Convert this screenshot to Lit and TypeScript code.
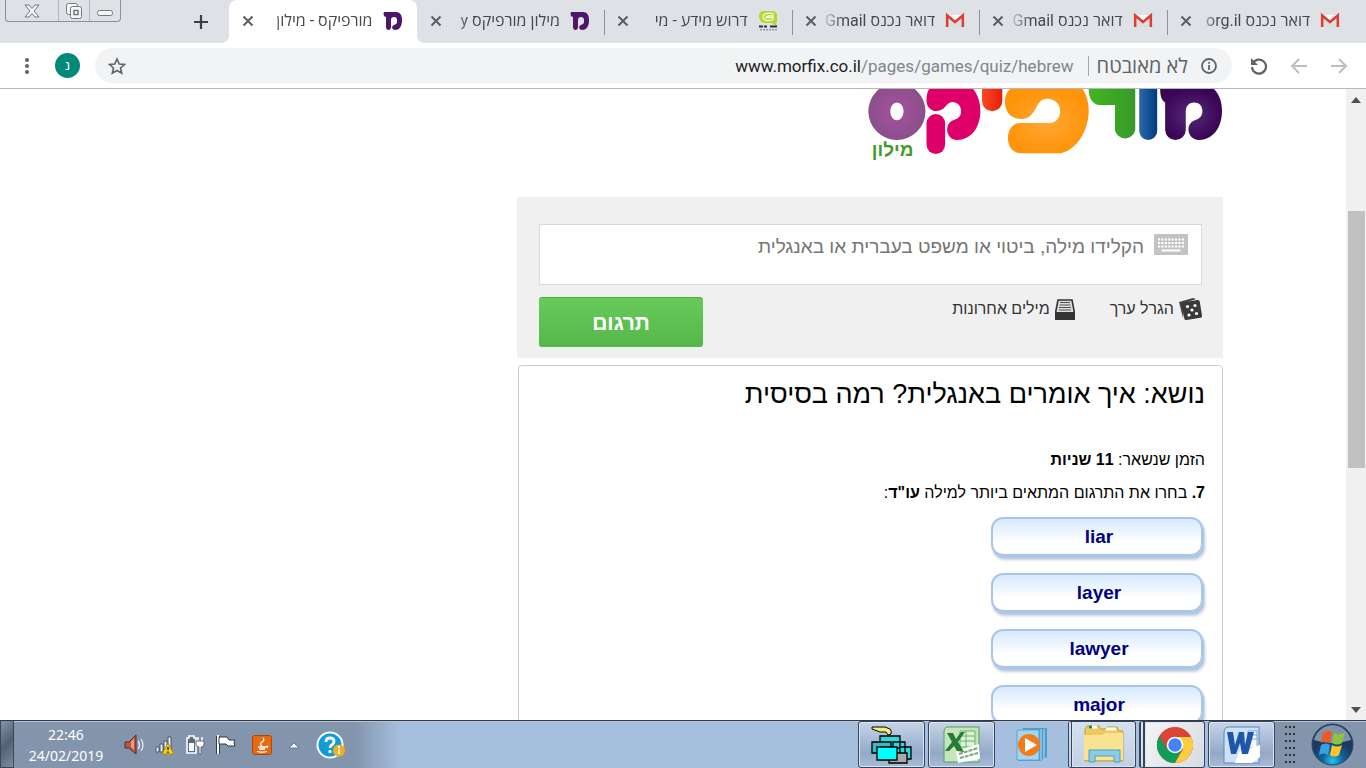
import { LitElement, html, css, svg } from "lit";
import { customElement } from "lit/decorators.js";

const gmail = svg`<svg class="fav" viewBox="0 0 20 20"><path d="M2 4h16v12H2z" fill="#f1f1f1"/><path d="M4 16V8l6 5 6-5v8z" fill="#dedede"/><path d="M4 4l6 6 6-6z" fill="#fafafa"/><path d="M2.200 16V4.500l7.800 6.500 7.800-6.500V16" fill="none" stroke="#d93f33" stroke-width="2.600"/></svg>`;
const morfix = svg`<svg class="fav" viewBox="0 0 20 20"><path d="M1 1h12c4 0 6 3 6 8 0 7-3 10-7 10-3 0-4-4-1-5 3-1 3-2 3-5 0-2-1-3-3-3s-3 1-3 3v7c0 4-5 4-5 0V6C1 6 0 3 1 1z" fill="#4b1766"/></svg>`;
const prog = svg`<svg class="fav" viewBox="0 0 20 20"><path d="M5 0h9q5 0 5 4v7q0 1-1 1l1 4-5-4H7q-5 0-6-6 0-6 4-6z" fill="#b9d531"/><path d="M16 3.500C12 1 5 2 5 6s6 4.500 10 2.500V5q-5-1-7 1.500h7" fill="none" stroke="#f3f9cf" stroke-width="1.300"/><path d="M1 15.500h4m1 0h3m3 0h7" stroke="#333" stroke-width="2.200"/><path d="M2 18.800h17" stroke="#777" stroke-width="1" stroke-dasharray="2 1"/></svg>`;

const tabs = [
  { icon: gmail, title: "דואר נכנס org.il", active: false },
  { icon: gmail, title: "דואר נכנס Gmail", active: false },
  { icon: gmail, title: "דואר נכנס Gmail", active: false },
  { icon: prog, title: "דרוש מידע - מי", active: false },
  { icon: morfix, title: "מילון מורפיקס y", active: false },
  { icon: morfix, title: "מורפיקס - מילון", active: true },
];

@customElement("browser-tabs")
class BrowserTabs extends LitElement {
  static styles = css`
    :host { display: flex; height: 43px; background: #dee1e6; direction: rtl; padding-right: 12px; font: 16px Roboto, "Open Sans", "Liberation Sans", sans-serif; color: #45494d; }
    .tabs { flex: 1; display: flex; min-width: 0; }
    .tab { flex: 1; min-width: 0; display: flex; align-items: center; padding: 0 14px 2px 13px; position: relative; }
    .tab.line::before { content: ""; position: absolute; left: 0; top: 10px; height: 25px; width: 1px; background: #8f9398; }
    .active { background: #fff; border-radius: 8px 8px 0 0; }
    .active::before, .active::after { content: ""; position: absolute; bottom: 0; width: 8px; height: 8px; }
    .active::before { right: -8px; background: radial-gradient(circle at 100% 0, #dee1e6 8px, #fff 8px); }
    .active::after { left: -8px; background: radial-gradient(circle at 0 0, #dee1e6 8px, #fff 8px); }
    .fav { width: 20px; height: 20px; flex: none; }
    .title { flex: 1; min-width: 0; overflow: hidden; white-space: nowrap; margin: 0 10px 0 4px; line-height: 26px; mask-image: linear-gradient(to left, #000 80%, transparent); }
    button { border: 0; padding: 0; background: none; color: inherit; display: grid; place-items: center; }
    .close { width: 12px; height: 16px; }
    .left { width: 229px; display: flex; justify-content: space-between; align-items: flex-start; }
    .add { width: 16px; height: 43px; margin-right: 20px; }
    .win { direction: ltr; display: flex; height: 22px; margin-left: 5px; border: 1px solid #8d9095; border-top: 0; border-radius: 0 0 4px 4px; box-sizing: border-box; }
    .win button { width: 31px; }
    .win button + button { border-left: 1px solid #b3b6ba; }
    .win .x { width: 52px; }
  `;
  render() {
    return html`
      <div class="tabs" role="tablist">
        ${tabs.map((t, i) => html`<div class="tab ${t.active ? "active" : ""} ${i < 4 ? "line" : ""}" role="tab">
          ${t.icon}<span class="title">${t.title}</span>
          <button class="close" aria-label="סגירה"><svg width="12" height="12"><path d="M1.500 1.500l9 9m0-9l-9 9" stroke="#5a5e62" stroke-width="2"/></svg></button>
        </div>`)}
      </div>
      <div class="left">
        <button class="add" aria-label="כרטיסייה חדשה"><svg width="16" height="16"><path d="M8 1v14M1 8h14" stroke="#3c4043" stroke-width="2.200"/></svg></button>
        <div class="win">
          <button class="x" aria-label="סגור"><svg width="16" height="14"><path d="M1 1h4l3 3.500L11 1h4l-5 6 5 6h-4L8 9.500 5 13H1l5-6z" fill="#f4f5f6" stroke="#74787c"/></svg></button>
          <button aria-label="שחזר"><svg width="18" height="17"><rect x="1.500" y="1.500" width="11" height="11" rx="2" fill="#f4f5f6" stroke="#74787c"/><rect x="5.500" y="4.500" width="11" height="12" rx="2" fill="#f4f5f6" stroke="#74787c"/><rect x="9" y="8.500" width="4" height="4" fill="#fff" stroke="#74787c" stroke-width="1.500"/></svg></button>
          <button aria-label="מזער"><svg width="16" height="16"><rect x=".5" y="7.500" width="15" height="5" rx="2" fill="#f4f5f6" stroke="#74787c"/></svg></button>
        </div>
      </div>`;
  }
}

@customElement("browser-toolbar")
class BrowserToolbar extends LitElement {
  static styles = css`
    :host { display: flex; align-items: center; height: 45px; box-sizing: content-box; border-bottom: 1px solid #b6b7b9; background: #fff; direction: rtl; padding: 0 17px; font: 20px "Open Sans", "Liberation Sans", sans-serif; color: #5f6368; }
    button { border: 0; padding: 0; background: none; color: inherit; width: 20px; height: 32px; display: grid; place-items: center; }
    .nav { display: flex; gap: 20px; }
    .box { flex: 1; min-width: 0; height: 35px; border-radius: 18px; background: #f1f3f4; margin: 0 17px 0 15px; display: flex; align-items: center; padding: 0 14px 0 12px; white-space: nowrap; }
    .safe { margin-right: 12px; line-height: 30px; }
    .line { width: 1px; height: 20px; background: #a5a8ab; margin: 0 8px 0 14px; }
    .url { flex: 1; direction: ltr; text-align: right; overflow: hidden; color: #80868b; font: 17px/30px Roboto, sans-serif; }
    .host { color: #202124; }
    .me { width: 25px; height: 25px; border-radius: 50%; background: #00897b; color: #fff; font-size: 13px; margin-left: 18px; }
  `;
  render() {
    return html`
      <div class="nav">
        <button aria-label="קדימה"><svg width="18" height="18"><path d="M1 9h15M9 2l7 7-7 7" fill="none" stroke="#bcbec1" stroke-width="2"/></svg></button>
        <button aria-label="הקודם"><svg width="18" height="18"><path d="M17 9H2m7-7L2 9l7 7" fill="none" stroke="#bcbec1" stroke-width="2"/></svg></button>
        <button aria-label="רענון"><svg width="18" height="18"><path d="M3 6a7 7 0 1 1-1 4" fill="none" stroke="#5f6368" stroke-width="2.200"/><path d="M1 1v7h7z" fill="#5f6368"/></svg></button>
      </div>
      <div class="box">
        <svg width="18" height="18"><circle cx="9" cy="9" r="7" fill="none" stroke="#5f6368" stroke-width="1.800"/><path d="M9 8v5M9 5v1.800" stroke="#5f6368" stroke-width="1.800"/></svg>
        <span class="safe">לא מאובטח</span><span class="line"></span>
        <span class="url" role="textbox" aria-label="כתובת"><span class="host">www.morfix.co.il</span>/pages/games/quiz/hebrew</span>
        <button aria-label="סימנייה"><svg width="18" height="18" viewBox="0 0 18 18"><path d="M9 2l2.200 5 5.300.5-4 3.500 1.200 5.200L9 13.500l-4.700 2.700L5.500 11l-4-3.500L6.800 7z" fill="none" stroke="#5f6368" stroke-width="1.600"/></svg></button>
      </div>
      <button class="me" aria-label="פרופיל">נ</button>
      <button aria-label="תפריט"><svg width="6" height="18"><circle cx="3" cy="3" r="2" fill="#5f6368"/><circle cx="3" cy="9" r="2" fill="#5f6368"/><circle cx="3" cy="15" r="2" fill="#5f6368"/></svg></button>`;
  }
}

@customElement("quiz-page")
class QuizPage extends LitElement {
  static styles = css`
    :host { display: flex; flex: 1; min-height: 0; overflow: hidden; direction: rtl; background: #fff; font-family: "Liberation Sans", Arial, sans-serif; color: #000; }
    .bar { width: 20px; background: #f0f0f0; display: flex; flex-direction: column; align-items: center; justify-content: space-between; padding: 8px 0 7px; box-sizing: border-box; }
    .track { flex: 1; width: 17px; display: grid; grid-template-rows: 107fr 256fr 238fr; }
    .thumb { grid-row: 2; background: #c1c1c1; }
    .scroll { flex: 1; min-width: 0; display: flex; justify-content: center; overflow: hidden; }
    .wrap { width: 100%; max-width: 1100px; }
    .main { max-width: 706px; }
    .logo { display: block; width: 355px; height: 72px; }
    .panel { background: #f0f0f0; margin-top: 36px; padding: 27px 21px 11px 22px; }
    .field { display: flex; background: #fff; border: 1px solid #d9d9d9; height: 50px; padding: 9px 13px 0; gap: 10px; align-items: flex-start; box-sizing: content-box; }
    textarea { flex: 1; min-width: 0; height: 40px; padding: 0; border: 0; outline: 0; resize: none; background: none; font: 19px/26px "Liberation Sans", Arial, sans-serif; color: #333; }
    textarea::placeholder { color: #757575; opacity: 1; }
    .row { display: flex; margin-top: 12px; align-items: flex-start; font: 16px/24px "Liberation Sans", Arial, sans-serif; }
    .row a { display: flex; align-items: center; gap: 5px; color: #333; text-decoration: none; margin-left: 35px; }
    .go { margin-right: auto; width: 164px; height: 50px; border: 0; border-top: 1px solid #4fae43; border-radius: 3px; background: linear-gradient(#66cb5a, #55b749); color: #fff; font: bold 21px "Liberation Sans", Arial, sans-serif; }
    .quiz { margin: 7px 0 0 1px; border: 1px solid #ccc; border-radius: 4px; padding: 10px 17px 40px; min-height: 400px; }
    h1 { font-weight: 400; font-size: 27px; line-height: 36px; margin: 0; }
    .time { font-size: 16px; line-height: 20px; margin: 38px 0 0; }
    .ask { font-size: 16px; line-height: 20px; margin: 13px 0 14px; }
    .answers { display: flex; flex-direction: column; gap: 17px; }
    .answers button { width: 212px; height: 39px; margin-right: 2px; border: 2px solid #a9c6e8; border-radius: 12px; background: linear-gradient(#d5e9ff, #fff 65%); box-shadow: 1px 2px 1px #a9c6e8, 2px 4px 3px #c3ccd8; color: #000080; font: bold 19px "Liberation Sans", Arial, sans-serif; padding: 0 0 0 4px; }
  `;
  render() {
    return html`
      <div class="bar" aria-hidden="true">
        <svg width="10" height="6"><path d="M0 6L5 0l5 6z" fill="#505050"/></svg>
        <div class="track"><div class="thumb"></div></div>
        <svg width="10" height="6"><path d="M0 0l5 6 5-6z" fill="#505050"/></svg>
      </div>
      <div class="scroll"><div class="wrap"><main class="main">
        <svg class="logo" viewBox="54 12 1068 216" preserveAspectRatio="xMaxYMid" role="img" aria-label="מורפיקס מילון">
          <defs>
            <radialGradient id="a"><stop offset="0" stop-color="#a650a0"/><stop offset="1" stop-color="#8b4f8a"/></radialGradient>
            <radialGradient id="b"><stop offset="0" stop-color="#ffa735"/><stop offset="1" stop-color="#ff940a"/></radialGradient>
            <radialGradient id="c"><stop offset="0" stop-color="#56297a"/><stop offset="1" stop-color="#3a0554"/></radialGradient>
            <linearGradient id="d"><stop offset="0" stop-color="#2b68a8"/><stop offset="1" stop-color="#003d80"/></linearGradient>
            <linearGradient id="e"><stop offset="0" stop-color="#42b51c"/><stop offset="1" stop-color="#379a2c"/></linearGradient>
            <linearGradient id="f"><stop offset="0" stop-color="#fa4a22"/><stop offset="1" stop-color="#e61e0a"/></linearGradient>
          </defs>
          <path fill="url(#a)" fill-rule="evenodd" d="M55 79a86 86 0 1 0 172 0a86 86 0 1 0-172 0zM121 79a20 27 0 1 1 40 0a20 27 0 1 1-40 0z"/>
          <g fill="#de0068"><rect x="230" y="87" width="56" height="120" rx="28"/><path d="M238 12H370C384 28 392 52 392 78C392 130 362 165 322 165C304 165 292 150 292 134C292 112 308 106 320 102C332 96 334 88 334 78C334 62 322 51 308 51C288 51 288 78 260 78C242 78 230 64 230 46C230 32 232 20 238 12Z"/></g>
          <path fill="url(#f)" d="M397 12H458V48A30 30 0 0 1 397 48Z"/>
          <path fill="url(#b)" d="M482 12H700C712 30 718 52 718 76C718 140 680 195 635 205H515C490 205 475 185 475 160C475 130 492 114 512 114H600C620 114 632 98 632 78C632 56 615 41 594 41C552 41 566 102 514 102C484 102 466 80 466 50C466 34 472 20 482 12Z"/>
          <path fill="url(#e)" d="M718 12H858V135A31 31 0 0 1 797 135V60H752C730 60 718 40 718 12Z"/>
          <path fill="url(#d)" d="M870 12H924V138A27 27 0 0 1 870 138Z"/>
          <path fill="url(#c)" d="M933 12H1095C1112 30 1119 52 1119 78C1119 130 1090 165 1050 165C1030 165 1018 150 1018 133C1018 112 1034 106 1048 101C1058 95 1060 86 1060 78C1060 62 1050 52 1035 52C1018 52 1010 64 1010 80V134A31 31 0 0 1 948 134V52C936 46 933 30 933 12Z"/>
          <text x="128" y="214" text-anchor="middle" font-family="Liberation Sans, sans-serif" font-weight="700" font-size="57" fill="#429c2c">מילון</text>
        </svg>
        <section class="panel">
          <div class="field">
            <svg width="34" height="21"><rect width="34" height="21" rx="1" fill="#c3c3c3"/><path d="M4 5.500h27M4 9h27M4 12.500h27" stroke="#fff" stroke-width="2.200" stroke-dasharray="2.200 1.200"/><path d="M7.500 16.500h19" stroke="#fff" stroke-width="2"/></svg>
            <textarea aria-label="חיפוש" placeholder="הקלידו מילה, ביטוי או משפט בעברית או באנגלית"></textarea>
          </div>
          <div class="row">
            <a href="#"><svg width="23" height="22" viewBox="0 0 23 22"><path d="M0 4l14-4 3 1-11 4-2 15z" fill="#444"/><rect x="4" y="3" width="18" height="18" rx="2" transform="rotate(-9 13 12)" fill="#3a3a3a"/><g fill="#fff"><circle cx="8.500" cy="8.500" r="1.600"/><circle cx="16" cy="7.500" r="1.600"/><circle cx="13" cy="12" r="1.600"/><circle cx="10" cy="17" r="1.600"/><circle cx="17.500" cy="15.500" r="1.600"/></g></svg>הגרל ערך</a>
            <a href="#"><svg width="20" height="21" viewBox="0 0 20 21"><path d="M3 1h14l2.500 13H.5z" fill="#ddd" stroke="#333" stroke-width="1.600"/><path d="M5 3.500h10M4.500 6h11M4 8.500h12M4 11h12" stroke="#555" stroke-width="1.200"/><path d="M0 13h20v8H0z" fill="#333"/></svg>מילים אחרונות</a>
            <button class="go">תרגום</button>
          </div>
        </section>
        <section class="quiz">
          <h1>נושא: איך אומרים באנגלית? רמה בסיסית</h1>
          <p class="time">הזמן שנשאר: <b>11 שניות</b></p>
          <p class="ask"><b>7.</b> בחרו את התרגום המתאים ביותר למילה <b>עו"ד</b>:</p>
          <div class="answers">${["liar", "layer", "lawyer", "major"].map((a) => html`<button>${a}</button>`)}</div>
        </section>
      </main></div></div>`;
  }
}

@customElement("task-bar")
class TaskBar extends LitElement {
  static styles = css`
    :host { display: flex; height: 48px; box-sizing: border-box; border-top: 1px solid #303a48; box-shadow: inset 0 1px #b4c3d6; background: linear-gradient(to right, #8295ad 355px, #a6bfde 400px, #a6bfde calc(100% - 110px), #8295ad calc(100% - 90px)); direction: ltr; align-items: center; color: #fff; font: 14px/21px "Noto Sans", sans-serif; }
    .desk { width: 14px; height: 47px; border: 1px solid #3d4856; border-top: 0; background: linear-gradient(135deg, #8493a5, #526174 50%, #7d8da1); box-sizing: border-box; }
    .clock { width: 104px; text-align: center; }
    .tray { display: flex; align-items: center; gap: 11px; margin-left: 6px; flex: 1; }
    .java { margin-left: 5px; }
    .up { margin: 0 5px; }
    button { flex: none; border: 1px solid #35445a; border-radius: 3px; padding: 0; height: 47px; width: 67px; box-sizing: border-box; background: linear-gradient(#c6d4e8, #93a9c7 70%, #a8bcd8); box-shadow: inset 0 0 0 1px #dbe5f1; display: grid; place-items: center; }
    .apps { display: flex; gap: 3px; }
    .plain { background: none; border-color: transparent; box-shadow: none; }
    .more { background: linear-gradient(#d4e0ee, #c1d0e3); border-left: 4px double #35445a; width: 68px; }
    .on { background: linear-gradient(120deg, #f4f5f5, #d7dbe0); border-left: 6px double #35445a; width: 66px; }
    .grip { width: 13px; height: 40px; margin: 0 14px 0 9px; background: radial-gradient(circle at 2px 2px, #2c3644 1px, #c7d2df 2px, transparent 2px) 0 0 / 4px 7px; }
    .orb { margin-right: 12px; flex: none; }
  `;
  render() {
    return html`
      <div class="desk"></div>
      <div class="clock">22:46<br>24/02/2019</div>
      <div class="tray">
        <svg width="20" height="22" viewBox="0 0 20 22"><path d="M1 8h4l7-7v19l-7-6H1z" fill="#c4533b" stroke="#4f2e2e"/><path d="M7 8l3-4v12l-3-3z" fill="#ed9b83"/><path d="M14 7q3 4 0 8M17 5q4 6 0 12" fill="none" stroke="#e1ebf5" stroke-width="1.300"/></svg>
        <svg width="19" height="20" viewBox="0 0 19 20"><path d="M1 12h3v5H1zM5 9h3v8H5zM9 6h3v11H9zM13 2h3v15h-3z" fill="#e9eff5" stroke="#4b5769"/><path d="M13 8l6 11H7z" fill="#f6cf1e" stroke="#ad850a"/><path d="M13 12v3m0 1.500v1.500" stroke="#222" stroke-width="1.500"/></svg>
        <svg width="20" height="22" viewBox="0 0 20 22"><path d="M2 4h2V2h5v2h2v15H2z" fill="#5c6b7d" stroke="#fff" stroke-width="1.600"/><path d="M4 9h5v8H4z" fill="#fff"/><path d="M13 3v4m4-4v4" stroke="#fff" stroke-width="1.500"/><path d="M11 7h8v3q0 3-3 3v7h-2v-7q-3 0-3-3z" fill="#fff" stroke="#4b5769" stroke-width=".8"/></svg>
        <svg width="20" height="22" viewBox="0 0 20 22"><path d="M2 2v18" stroke="#2f3947" stroke-width="4"/><path d="M2 1v19" stroke="#fff" stroke-width="2"/><path d="M3 3h8l2 3h6q-2 3 0 6h-7l-2-2H3z" fill="#fff" stroke="#2f3947"/></svg>
        <svg class="java" width="20" height="20" viewBox="0 0 20 20"><rect x=".5" y=".5" width="19" height="19" rx="2" fill="#e56a13" stroke="#b74700"/><path d="M11 3q2 2-1 4t0 4M6 12h8M7 14h6M5 16.500q5 1.500 10 0M14 12q3-2 1 1" fill="none" stroke="#fff" stroke-width="1.300"/></svg>
        <svg class="up" width="12" height="8"><path d="M1 7l5-5 5 5z" fill="#f3f6fa" stroke="#4e5b6d" stroke-width=".7"/></svg>
        <svg width="30" height="28" viewBox="0 0 30 28"><circle cx="14" cy="14" r="13.500" fill="#fff"/><circle cx="14" cy="14" r="11.500" fill="#109cd8"/><path d="M10 11q0-4 4-4t4 3.500q0 2-2 3.200t-2 3.300M14 19v3" fill="none" stroke="#fff" stroke-width="2.800"/><circle cx="23" cy="19.500" r="6" fill="#f8ae1b"/><path d="M23 15v2m0 1v5" stroke="#fff" stroke-width="2"/></svg>
      </div>
      <div class="apps">
        <button aria-label="Windows"><svg width="42" height="40" viewBox="0 0 42 40"><g stroke="#000" stroke-width="1.300"><path d="M9 11h20v12H9zM22 17h12v12H22zM29 22h11v12H29z" fill="#37d5d8"/><path d="M1 17h19v11H1z" fill="#35bcc0"/><path d="M18 28h18v10H18z" fill="#aaa"/><path d="M6 22h20v13H6z" fill="#0ff"/></g><path d="M1 2h13l5 2q2 2 1 5l-3 1-2-3H9L1 4z" fill="#f5ee75" stroke="#000"/></svg></button>
        <button aria-label="Excel"><svg width="38" height="38" viewBox="0 0 38 38"><path d="M5 1h31v35H1V6q0-5 4-5z" fill="#c8e4bf" stroke="#4da552"/><path d="M17 5h15v16H17zM23 5v16M17 10h15M17 15h15" fill="#dff1da" stroke="#69b367"/><path d="M13 25l23-7 1 15-22 4z" fill="#fff"/><path d="M16 28l19-6M17 32l18-5" stroke="#78a878" stroke-width="2" stroke-dasharray="4 1"/><path d="M4 7h6l3 6 5-7h4l-7 10 6 10-7-1-3-5-5 5H2l7-9z" fill="#257c34"/></svg></button>
        <button class="plain" aria-label="Media Player"><svg width="34" height="36" viewBox="0 0 34 36"><path d="M8 1h24v29l-7 4H3z" fill="#4b9ccc"/><path d="M29 2v30M26 2v31" stroke="#b9e1f5"/><path d="M2 3h22v30H2z" fill="#a5d5ee" stroke="#5ba4cf"/><circle cx="14" cy="18" r="11" fill="#f17c1a"/><path d="M10 11l12 7-12 7z" fill="#fff"/></svg></button>
        <button class="more" aria-label="Explorer"><svg width="42" height="40" viewBox="0 0 42 40"><path d="M2 4l2-3h12l2 3h4l2-2h10l2 4h4v30H2z" fill="#edc95f" stroke="#c59a36"/><path d="M6 2h8M23 4h10" stroke="#fff" stroke-width="3"/><path d="M6 2h3" stroke="#268847" stroke-width="3"/><path d="M1 10h18l3-2h18v27H1z" fill="#f9e391"/><path d="M6 25h31v12h-6v-6H12v6H6z" fill="#8bcbe6" stroke="#4f9fc4"/></svg></button>
        <button class="on" aria-label="Chrome"><svg width="38" height="38" viewBox="0 0 38 38"><circle cx="19" cy="19" r="18" fill="#da4437"/><path d="M3.400 10A18 18 0 0 0 19 37l7-14-7 4-8-4z" fill="#119d58"/><path d="M19 11h16.200A18 18 0 0 1 19 37l8-14z" fill="#fdcd40"/><circle cx="19" cy="19" r="8.300" fill="#fff"/><circle cx="19" cy="19" r="6.700" fill="#4285f4"/></svg></button>
        <button aria-label="Word"><svg width="38" height="38" viewBox="0 0 38 38"><path d="M6 1h30v36H1V7q0-6 5-6z" fill="#cfe1f7" stroke="#5388c6"/><path d="M25 5h9v17h-9zM25 9h9M25 13h9" fill="#f3f8ff" stroke="#7da8da"/><path d="M16 26l21-7v12l-8 6H12z" fill="#fff"/><path d="M4 6h6l2 13 4-13h5l1 13 3-13h6l-6 22h-6l-2-11-4 11H8z" fill="#1d56aa"/></svg></button>
      </div>
      <div class="grip"></div>
      <svg class="orb" width="43" height="43" viewBox="0 0 43 43"><defs><radialGradient id="o" cy=".9"><stop offset="0" stop-color="#23c6ee"/><stop offset=".5" stop-color="#12639a"/><stop offset="1" stop-color="#1d3b60"/></radialGradient></defs><circle cx="21.500" cy="21.500" r="20.500" fill="url(#o)" stroke="#28476a"/><path d="M3 17a19 19 0 0 1 37 0q-18 6-37 0z" fill="#fff" opacity=".45"/><path d="M12 10q5-4 9-1l-2 11q-4-3-9 0z" fill="#ef5a24"/><path d="M23 10q5 3 11-1l-3 11q-5 3-10 0z" fill="#8cc63e"/><path d="M10 22q5-3 9 0l-2 10q-4-3-9 0z" fill="#3aa0e5"/><path d="M21 22q5 3 10 0l-3 10q-5 3-9 0z" fill="#fcc629"/></svg>`;
  }
}

@customElement("app-root")
class AppRoot extends LitElement {
  static styles = css`
    :host { display: flex; flex-direction: column; height: 100vh; overflow: hidden; }
  `;
  render() {
    return html`<browser-tabs></browser-tabs><browser-toolbar></browser-toolbar><quiz-page></quiz-page><task-bar></task-bar>`;
  }
}
